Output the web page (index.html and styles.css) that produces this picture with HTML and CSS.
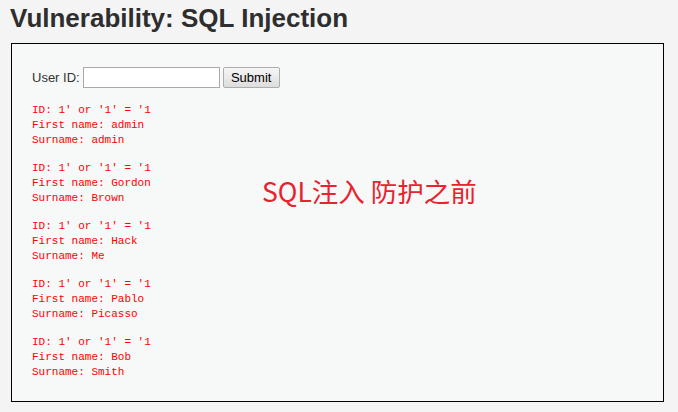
FILE: index.html
```html
<!DOCTYPE html>
<html>
<head>
<meta charset="utf-8">
<link rel="stylesheet" href="styles.css">
</head>
<body>
<h1 class="title">Vulnerability: SQL Injection</h1>
<div class="vuln">
  <form class="form">
    <label class="label">User ID:</label>
    <input class="field" type="text">
    <button class="submit" type="button">Submit</button>
  </form>
  <pre class="result">ID: 1' or '1' = '1
First name: admin
Surname: admin</pre>
  <pre class="result">ID: 1' or '1' = '1
First name: Gordon
Surname: Brown</pre>
  <pre class="result">ID: 1' or '1' = '1
First name: Hack
Surname: Me</pre>
  <pre class="result">ID: 1' or '1' = '1
First name: Pablo
Surname: Picasso</pre>
  <pre class="result">ID: 1' or '1' = '1
First name: Bob
Surname: Smith</pre>
  <div class="note">SQL注入 防护之前</div>
</div>
</body>
</html>
```
FILE: styles.css
```css
html, body {
  margin: 0;
  padding: 0;
  background: #f4f4f4;
  font-family: "Liberation Sans", Arial, sans-serif;
  color: #2f2f2f;
}
body {
  padding: 4px 14px 0 11px;
}
.title {
  margin: 0 0 0 -1px;
  font-size: 26px;
  font-weight: bold;
  line-height: 29px;
  color: #2e2e2e;
}
.vuln {
  position: relative;
  margin-top: 10px;
  border: 1px solid #000;
  background: #f7f8f8;
  height: 359px;
  padding: 23px 20px 0 20px;
  box-sizing: border-box;
}
.form {
  display: flex;
  align-items: center;
  gap: 3px;
  margin: 0;
  font-size: 13px;
  color: #333;
}
.field {
  width: 137px;
  height: 21px;
  box-sizing: border-box;
  border: 1px solid #a9a9a9;
  background: #fff;
  padding: 0 2px;
  margin: 0;
}
.submit {
  height: 21px;
  width: 57px;
  box-sizing: border-box;
  border: 1px solid #adadad;
  border-radius: 2px;
  background: linear-gradient(#f6f6f6, #dddddd);
  font-family: "Liberation Sans", Arial, sans-serif;
  font-size: 13px;
  color: #000;
  padding: 0;
  margin: 0;
}
.result {
  margin: 15px 0 0 0;
  font-family: "Liberation Mono", "Courier New", monospace;
  font-size: 11px;
  line-height: 15px;
  color: #ff0000;
}
.result + .result {
  margin-top: 13px;
}
.note {
  position: absolute;
  left: 250px;
  top: 130px;
  font-family: "Noto Sans CJK SC", "Microsoft YaHei", sans-serif;
  font-size: 26.5px;
  line-height: 34px;
  color: #e8232d;
}
```
